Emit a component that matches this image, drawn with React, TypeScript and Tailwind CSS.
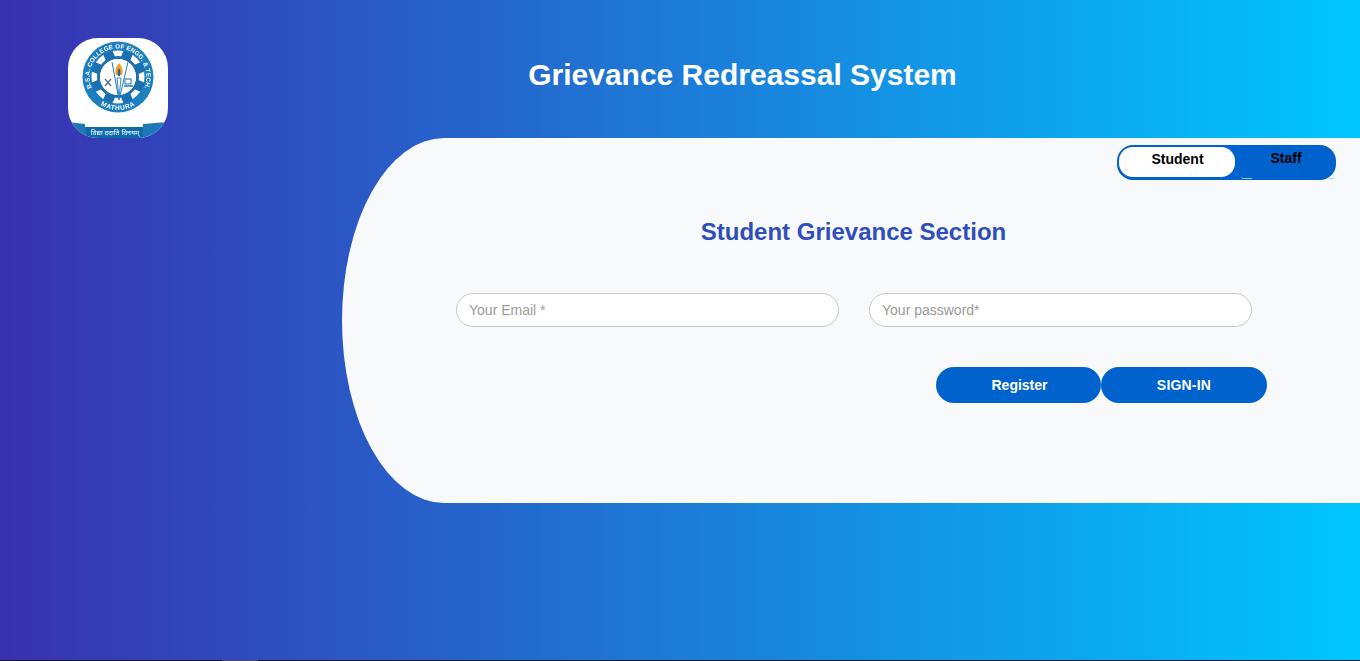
const sans = "font-['Liberation_Sans',Arial,sans-serif]";

function Logo() {
  const teeth = Array.from({ length: 8 }, (_, i) => i * 45 + 22.5);
  return (
    <svg viewBox="0 0 100 100" className="w-[100px] h-[100px] shrink-0 rounded-[30px]">
      <defs>
        <filter id="soft" x="-5%" y="-5%" width="110%" height="110%">
          <feGaussianBlur stdDeviation="0.4" />
        </filter>
        <path id="topArc" d="M 26.7 55.3 A 28.5 28.5 0 1 1 73.3 55.3" fill="none" />
        <path id="botArc" d="M 28.8 64.3 A 33 33 0 0 0 71.2 64.3" fill="none" />
      </defs>
      <rect width="100" height="100" fill="#fff" />
      <g filter="url(#soft)">
        <circle cx="50" cy="39" r="35.5" fill="#1f7fc0" />
        <circle cx="50" cy="39" r="26.5" fill="#fff" />
        {teeth.map((a) => (
          <rect key={a} x="45" y="12" width="10" height="9" fill="#1a6fb0" transform={`rotate(${a} 50 39)`} />
        ))}
        <circle cx="50" cy="39" r="19.5" fill="none" stroke="#1a6fb0" strokeWidth="3" />
        <circle cx="50" cy="39" r="18" fill="#fff" />
        <path d="M44 24 L51 62 L60 24" stroke="#1f7fc0" strokeWidth="1" fill="none" />
        <path d="M49 40 L51 60 L53 40Z" fill="#fff" stroke="#1f7fc0" strokeWidth="0.9" />
        <path d="M51 25 C47.5 29 46.5 33 48 37 L54 37 C55.5 33 54.5 29 51 25Z" fill="#f0a020" />
        <path d="M51 30 C49.5 32 49.5 35 50 38 L52 38 C52.5 35 52.5 32 51 30Z" fill="#2b5fa0" />
        <path d="M37 41 L43 48 M43 41 L37 48" stroke="#4b6a86" strokeWidth="1.3" />
        <rect x="57" y="41" width="6" height="5" fill="none" stroke="#1a6fb0" strokeWidth="1" />
        <path d="M56 48 H65" stroke="#1a6fb0" strokeWidth="1.4" />
        <text fontFamily="Liberation Sans, sans-serif" fontSize="6.2" fontWeight="700" fill="#fff" letterSpacing="0.1">
          <textPath href="#topArc" startOffset="50%" textAnchor="middle">B.S.A. COLLEGE OF ENGG. &amp; TECH.</textPath>
        </text>
        <text fontFamily="Liberation Sans, sans-serif" fontSize="6.5" fontWeight="700" fill="#fff" letterSpacing="0.6">
          <textPath href="#botArc" startOffset="50%" textAnchor="middle">MATHURA</textPath>
        </text>
        <path d="M0 84 L17 86 L17 89 L75 89 L75 86 L100 84 L100 100 L0 100Z" fill="#1b78b6" />
        <rect x="18" y="89" width="57" height="11" fill="#0f6aa8" />
        <text x="47" y="96.5" textAnchor="middle" fontSize="7" fill="#fff" fontFamily="Noto Sans, sans-serif">विद्या ददाति विनयम्</text>
      </g>
    </svg>
  );
}

export default function App() {
  return (
    <div className={`${sans} w-full h-[661px] overflow-hidden flex flex-col bg-[linear-gradient(to_right,#3931af,#00c6ff)]`}>
      <div className="flex-1 flex flex-col pt-[38px]">
        <header className="flex pl-[68px] pr-[43px] h-[100px]">
          <Logo />
          <h1 className="flex-1 text-center text-white font-bold text-[30px] leading-[74px] h-[74px]">
            Grievance Redreassal System
          </h1>
        </header>
        <main className="ml-[342px] h-[365px] bg-[#f8f9fa] rounded-l-[102px_182.5px] flex flex-col pt-[7px]">
          <div className="self-end mr-[24px] w-[219px] h-[35px] flex rounded-[16px] border-2 border-[#0062cc] bg-[#0062cc] text-[14px] font-bold text-black">
            <div className="w-[116px] h-[30px] bg-white rounded-[14px] text-center leading-[24px] pl-px">Student</div>
            <div className="relative flex-1 text-center leading-[22px] pl-[3px]">
              Staff
              <span className="absolute left-[6px] bottom-[-1px] w-[11px] h-[3px] rounded-bl-[10px] border-b border-[#a9c9ec]" />
              <span className="absolute right-[-1px] bottom-[-1px] w-[6px] h-[3px] rounded-br-[8px] border-b border-[#a9c9ec]" />
            </div>
          </div>
          <h3 className="mt-[36px] pl-[5px] text-center text-[24px] leading-[32px] font-bold text-[#2f4ebd]">
            Student Grievance Section
          </h3>
          <form className="mt-[45px] pl-[114px] flex flex-col">
            <div className="flex gap-[30px]">
              <input
                readOnly
                placeholder="Your Email *"
                className="w-[383px] h-[34px] bg-white rounded-[17px] border border-[#c8c8c8] px-3 text-[14px] text-[#495057] placeholder:text-[#9a9a9a] outline-none"
              />
              <input
                readOnly
                placeholder="Your password*"
                className="w-[383px] h-[34px] bg-white rounded-[17px] border border-[#c8c8c8] px-3 text-[14px] text-[#495057] placeholder:text-[#9a9a9a] outline-none"
              />
            </div>
            <div className="mt-[40px] ml-[480px] flex">
              <button type="button" className="w-[165px] h-[36px] pl-[2px] rounded-[18px] bg-[#0062cc] text-white text-[14px] font-bold">Register</button>
              <button type="button" className="w-[166px] h-[36px] rounded-[18px] bg-[#0062cc] text-white text-[14px] font-bold tracking-[0.2px]">SIGN-IN</button>
            </div>
          </form>
        </main>
      </div>
      <div className="h-px flex shrink-0 bg-[#1a1a2a]">
        <div className="ml-[222px] w-[36px] bg-[#4a4a55]" />
      </div>
    </div>
  );
}
